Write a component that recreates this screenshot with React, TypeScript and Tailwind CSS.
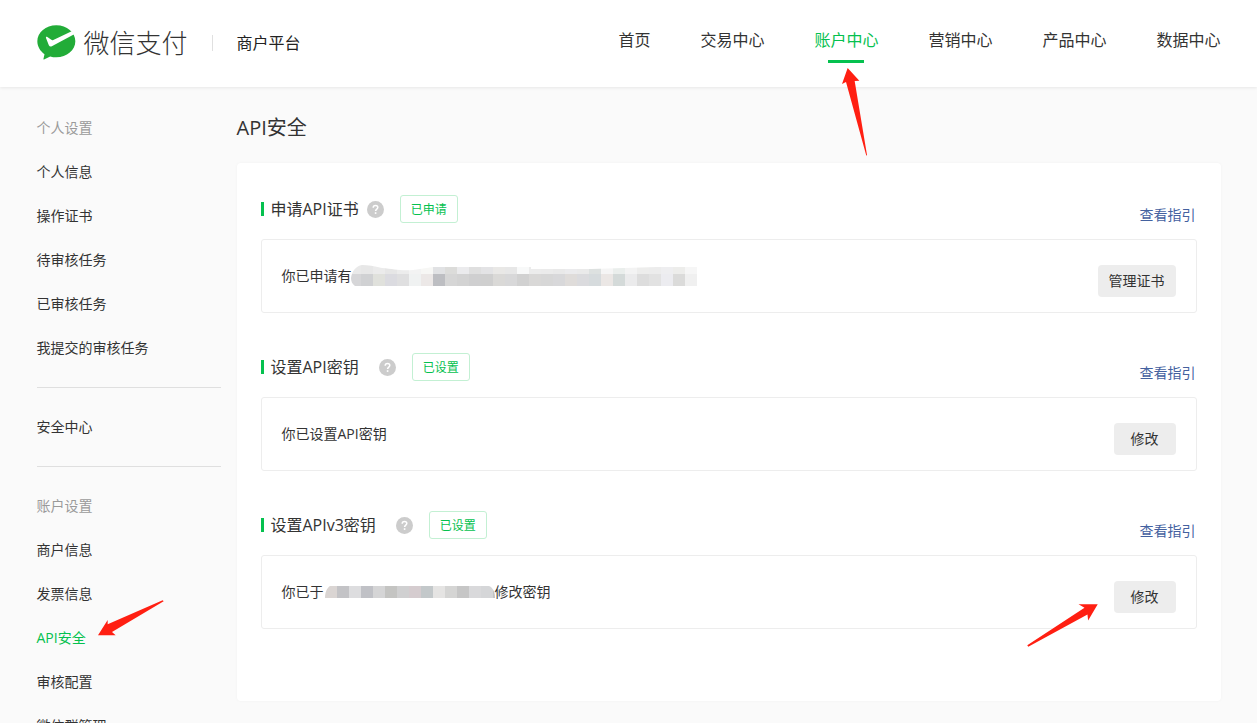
import clsx from "clsx";
import type { ReactNode } from "react";

const NAV_ITEMS = ["首页", "交易中心", "账户中心", "营销中心", "产品中心", "数据中心"];
const ACTIVE_NAV = "账户中心";

const SIDEBAR_GROUPS = [
  {
    title: "个人设置",
    items: ["个人信息", "操作证书", "待审核任务", "已审核任务", "我提交的审核任务"],
  },
  { title: "", items: ["安全中心"] },
  {
    title: "账户设置",
    items: ["商户信息", "发票信息", "API安全", "审核配置", "微信群管理"],
  },
];
const ACTIVE_SIDEBAR = "API安全";

// 12px blocks, upper row is the fainter one
const CERT_MASK_TOP = [
  "#e9e9e9", "#e7e7e7", "#ebebeb", "#e6e6e6", "#ececec", "#f3f3f3", "#f7f7f5", "#e1e2e4",
  "#dcdcda", "#ebebed", "#dfdfdf", "#e3e3e5", "#e9e8e6", "#e7e7e7", "#f8f9f9", "#ececec",
  "#ebebeb", "#e9e9e9", "#ebebed", "#eaeaea", "#dde1e0", "#f5f5f5", "#eaeeec", "#f3f3f3",
  "#ededec", "#ececec", "#eeeef0", "#ededeb", "#f6f6f6",
];
const CERT_MASK_BOTTOM = [
  "#d6d6d8", "#d0d1d3", "#e0e1dc", "#dbdbe0", "#dfdfe0", "#f0f2f2", "#ece8e7", "#bdbec2",
  "#d6d6d6", "#d3d3d3", "#cfcfd0", "#cfcfcf", "#dad9d7", "#d8d8d9", "#d1d1d1", "#d9d8d7",
  "#d7d7d7", "#d8d8da", "#dfdcda", "#dbdbde", "#d6dbdd", "#ebe7e5", "#d4dad9", "#ebebec",
  "#dddddd", "#e2e2e2", "#ececf0", "#dbdbda", "#f0f0f0",
];
const DATE_MASK = [
  "#dad5d3", "#c3c3c6", "#dddddf", "#c0c1c6", "#d5d5d6", "#c4c4c2", "#d0d0d1", "#d5cccf",
  "#c3c8ca", "#e5e4e3", "#d5d5d4", "#c6c6c6", "#d9d9db", "#d5d6d8", "#c3c3c3",
];

function Logo() {
  return (
    <svg viewBox="50 47 117 105" className="h-[35px] w-[39px]" aria-hidden="true">
      <path
        fill="#22ac38"
        d="M108 48c31.500 0 57 21.500 57 48s-25.500 48-57 48c-6.500 0-12.700-.9-18.500-2.600L71 150.500c-1.500.6-2-.1-1.700-1.300l3.200-14.600C59.400 125.800 51 111.700 51 96c0-26.500 25.500-48 57-48z"
      />
      <path
        fill="#fff"
        d="M77 86c-1-3 1.500-4.500 4-3l12 8.500c2 1.300 4 1.500 6 .5L154 66l9 8-68.500 36.500c-4 2-7 1-9-3z"
      />
    </svg>
  );
}

function HelpIcon() {
  return (
    <svg viewBox="0 0 17 17" className="size-[17px]" aria-hidden="true">
      <circle cx="8.500" cy="8.500" r="8.500" fill="#ccc" />
      <path
        d="M6.200 6.700c0-1.400 1-2.200 2.300-2.200s2.300.8 2.300 2c0 1.600-2.200 1.700-2.200 3.500"
        fill="none"
        stroke="#fff"
        strokeWidth="1.500"
      />
      <rect x="7.800" y="11.200" width="1.600" height="1.700" fill="#fff" />
    </svg>
  );
}

function CertMask() {
  return (
    <svg viewBox="0 0 346 22" className="-mt-px -ml-px h-[22px] w-[346px]" role="img" aria-label="已隐藏">
      <clipPath id="cert-mask">
        <path d="M4 21C1 19 0 16 0 13 1 6 5 1 11 0c6 0 12 1 20 3 12 1 18 3 31 2L82 2h98v2h60l66-2h46v19z" />
      </clipPath>
      <g clipPath="url(#cert-mask)" shapeRendering="crispEdges">
        {CERT_MASK_TOP.map((color, i) => (
          <rect key={i} x={i * 12 - 2} y="0" width="12" height="9" fill={color} />
        ))}
        {CERT_MASK_BOTTOM.map((color, i) => (
          <rect key={i} x={i * 12 - 2} y="9" width="12" height="12" fill={color} />
        ))}
      </g>
    </svg>
  );
}

function DateMask() {
  return (
    <svg viewBox="0 0 170 12" className="ml-px h-3 w-[170px]" role="img" aria-label="已隐藏">
      <clipPath id="date-mask">
        <path d="M0 12C0 6 2 2 5 0h159c3 1 6 5 6 12z" />
      </clipPath>
      <g clipPath="url(#date-mask)" shapeRendering="crispEdges">
        {DATE_MASK.map((color, i) => (
          <rect key={i} x={i * 12} y="0" width="12" height="12" fill={color} />
        ))}
      </g>
    </svg>
  );
}

function Header() {
  return (
    <header className="relative bg-white shadow-[0_1px_3px_rgba(0,0,0,0.08)]">
      <div className="mx-auto flex h-[87px] max-w-[1184px] items-center justify-between pb-0.5">
        <a href="#" className="flex items-center">
          <Logo />
          <span className="ml-2 text-[26px] leading-9 font-light text-[#333]">微信支付</span>
          <span className="mx-6 h-4 w-px bg-[#e0e0e0]" />
          <span className="text-base leading-6 text-[#222]">商户平台</span>
        </a>
        <nav>
          <ul className="flex gap-[50px]">
            {NAV_ITEMS.map((item) => {
              const active = item === ACTIVE_NAV;
              return (
                <li key={item} className="relative pb-[5px]">
                  <a
                    href="#"
                    className={clsx("block text-base leading-6", active && "text-[#05c14f]")}
                  >
                    {item}
                  </a>
                  {active && (
                    <>
                      <span className="absolute top-8 left-1/2 h-[3px] w-9 -translate-x-1/2 bg-[#05c14f]" />
                      <svg
                        viewBox="729 173 75 264"
                        className="absolute top-10 left-7 z-10 h-[88px] w-[25px]"
                        aria-hidden="true"
                      >
                        <path fill="#ff1f12" d="M746 173l35 38-14 1 37 222-2 2-61-221-12 6z" />
                      </svg>
                    </>
                  )}
                </li>
              );
            })}
          </ul>
        </nav>
      </div>
    </header>
  );
}

function Sidebar() {
  return (
    <aside className="w-[184px] shrink-0">
      {SIDEBAR_GROUPS.map((group, index) => (
        <div key={index}>
          {index > 0 && <hr className="my-[17px] border-[#dfdfdf]" />}
          {group.title && <h2 className="text-sm leading-11 text-[#9a9a9a]">{group.title}</h2>}
          <ul>
            {group.items.map((item) => {
              const active = item === ACTIVE_SIDEBAR;
              return (
                <li key={item} className="relative">
                  <a
                    href="#"
                    className={clsx("block text-sm leading-11", active && "text-[#05c14f]")}
                  >
                    {item}
                  </a>
                  {active && (
                    <svg
                      viewBox="233 601 198 108"
                      className="absolute -top-4 left-[61px] h-9 w-[66px]"
                      aria-hidden="true"
                    >
                      <path fill="#ff1f12" d="M233 707l29-46v13l165-72 3 3-155 92 11 10z" />
                    </svg>
                  )}
                </li>
              );
            })}
          </ul>
        </div>
      ))}
    </aside>
  );
}

interface SettingSectionProps {
  title: string;
  status: string;
  action: string;
  wideTitle?: boolean;
  highlighted?: boolean;
  children: ReactNode;
}

function SettingSection({
  title,
  status,
  action,
  wideTitle,
  highlighted,
  children,
}: SettingSectionProps) {
  return (
    <section className="mb-10">
      <div className="flex items-end justify-between">
        <div className="flex h-7 items-center">
          <span className="h-3.5 w-[3px] bg-[#05c14f]" />
          <h3 className={clsx("ml-[7px] text-base leading-6", wideTitle ? "mr-5" : "mr-2")}>
            {title}
          </h3>
          <HelpIcon />
          <span className="ml-4 rounded-[3px] border border-[#c3f0d3] px-2.5 pt-0.5 text-xs leading-6 text-[#05c14f]">
            {status}
          </span>
        </div>
        <a href="#" className="mr-px text-sm leading-4 text-[#44619f]">
          查看指引
        </a>
      </div>
      <div className="mt-4 flex items-start justify-between rounded-[3px] border border-[#ededed] px-5 pt-[25px] pb-[15px]">
        <p className="flex items-center text-sm leading-[22px]">{children}</p>
        <div className="relative">
          <button
            type="button"
            className={clsx(
              "block rounded bg-[#ededed] text-sm leading-8",
              action.length > 2 ? "px-[11px]" : "px-[17px]"
            )}
          >
            {action}
          </button>
          {highlighted && (
            <svg
              viewBox="83 282 213 130"
              className="absolute top-[23px] right-full mr-4 h-[43px] w-[71px]"
              aria-hidden="true"
            >
              <path fill="#ff1f12" d="M296 283h-58l18 10L83 407l3 4 179-97 2 18z" />
            </svg>
          )}
        </div>
      </div>
    </section>
  );
}

export default function App() {
  return (
    <div
      lang="zh-CN"
      className="min-h-screen bg-[#fafafa] font-['Open_Sans','Noto_Sans_CJK_SC',sans-serif] text-[#333]"
    >
      <Header />
      <div className="mx-auto flex max-w-[1184px] items-start gap-4 pt-[19px]">
        <Sidebar />
        <main className="min-w-0 flex-1">
          <h1 className="text-xl leading-11">API安全</h1>
          <div className="mt-[13px] rounded bg-white px-6 pt-8 pb-8 shadow-[0_0_3px_rgba(0,0,0,0.04)]">
            <SettingSection title="申请API证书" status="已申请" action="管理证书">
              你已申请有
              <CertMask />
            </SettingSection>
            <SettingSection title="设置API密钥" status="已设置" action="修改" wideTitle>
              你已设置API密钥
            </SettingSection>
            <SettingSection
              title="设置APIv3密钥"
              status="已设置"
              action="修改"
              wideTitle
              highlighted
            >
              你已于
              <DateMask />
              修改密钥
            </SettingSection>
          </div>
        </main>
      </div>
    </div>
  );
}
